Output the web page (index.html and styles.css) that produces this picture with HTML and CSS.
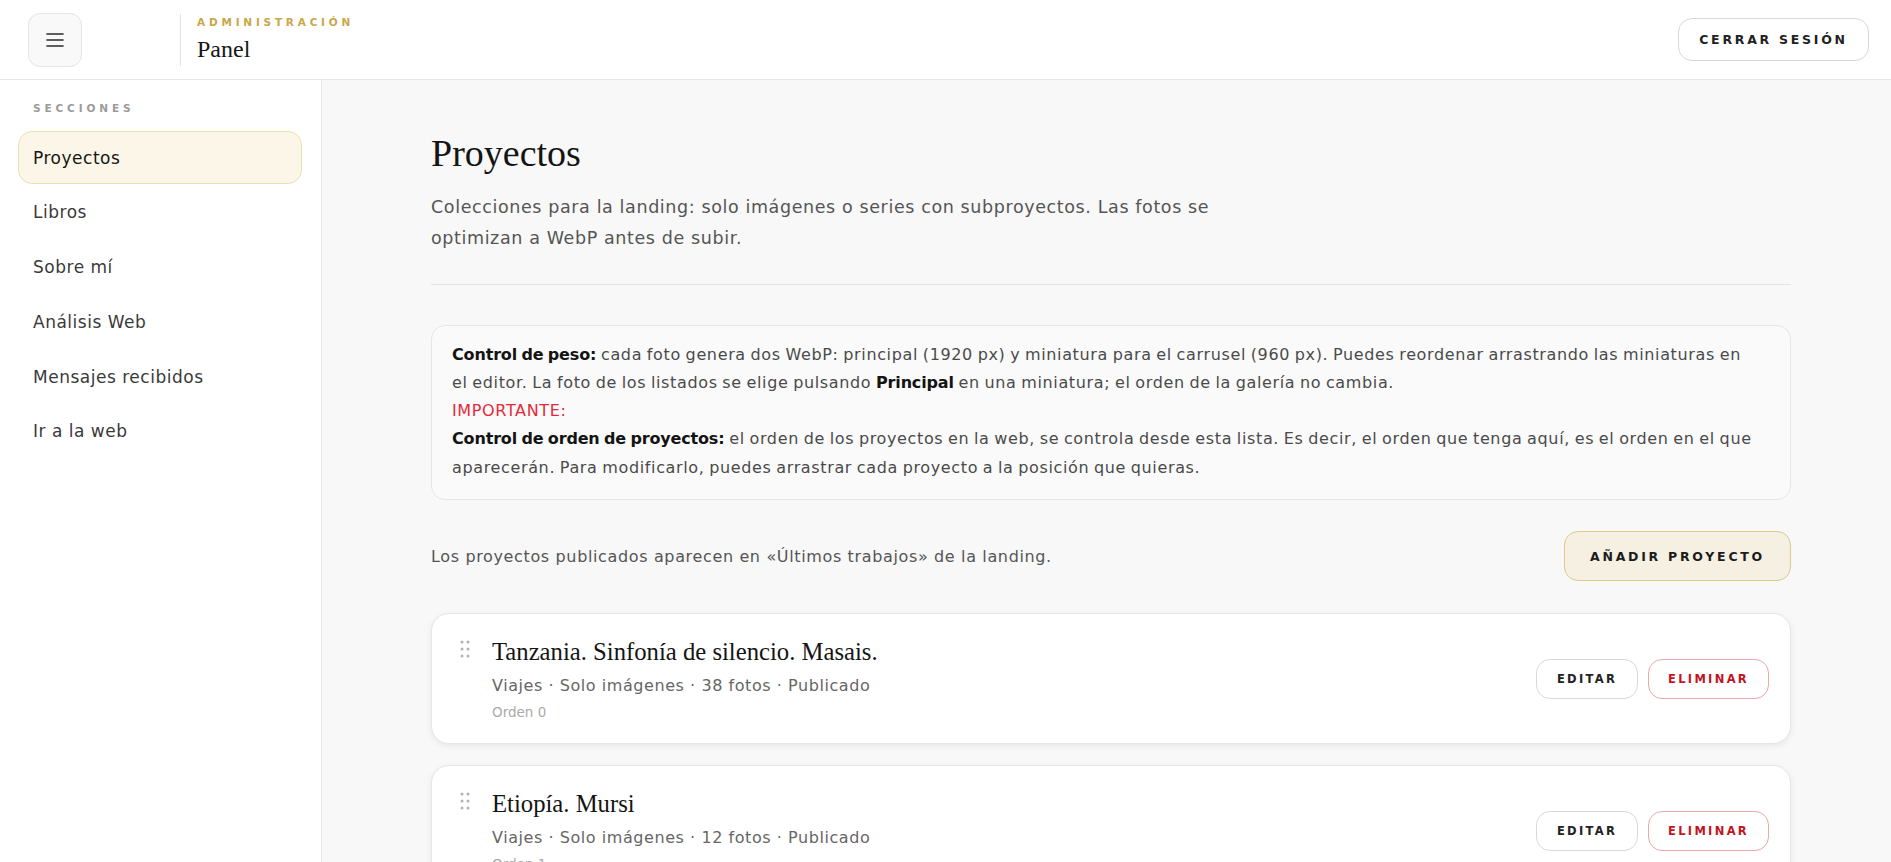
FILE: index.html
```html
<!DOCTYPE html>
<html lang="es">
<head>
  <meta charset="UTF-8">
  <title>Panel · Administración</title>
  <link rel="stylesheet" href="styles.css">
</head>
<body>
  <header class="topbar">
    <button class="menu-btn" aria-label="Menú">
      <svg width="18" height="14" viewBox="0 0 18 14" fill="none" stroke="#2b2b2b" stroke-width="1.6" stroke-linecap="round">
        <line x1="1" y1="1" x2="17" y2="1"/>
        <line x1="1" y1="7" x2="17" y2="7"/>
        <line x1="1" y1="13" x2="17" y2="13"/>
      </svg>
    </button>
    <div class="brand">
      <span class="brand-kicker">Administración</span>
      <span class="brand-title">Panel</span>
    </div>
    <button class="btn btn-outline logout">Cerrar sesión</button>
  </header>

  <div class="layout">
    <aside class="sidebar">
      <div class="sidebar-label">Secciones</div>
      <nav class="nav">
        <a href="#" class="nav-item active">Proyectos</a>
        <a href="#" class="nav-item">Libros</a>
        <a href="#" class="nav-item">Sobre mí</a>
        <a href="#" class="nav-item">Análisis Web</a>
        <a href="#" class="nav-item">Mensajes recibidos</a>
        <a href="#" class="nav-item">Ir a la web</a>
      </nav>
    </aside>

    <main class="content">
      <section class="page-head">
        <h1>Proyectos</h1>
        <p class="lead">Colecciones para la landing: solo imágenes o series con subproyectos. Las fotos se optimizan a WebP antes de subir.</p>
      </section>

      <div class="notice">
        <strong>Control de peso:</strong> cada foto genera dos WebP: principal (1920 px) y miniatura para el carrusel (960 px). Puedes reordenar arrastrando las miniaturas en el editor. La foto de los listados se elige pulsando <strong>Principal</strong> en una miniatura; el orden de la galería no cambia.<br>
        <span class="warn">IMPORTANTE:</span><br>
        <strong>Control de orden de proyectos:</strong> el orden de los proyectos en la web, se controla desde esta lista. Es decir, el orden que tenga aquí, es el orden en el que aparecerán. Para modificarlo, puedes arrastrar cada proyecto a la posición que quieras.
      </div>

      <div class="toolbar">
        <p>Los proyectos publicados aparecen en «Últimos trabajos» de la landing.</p>
        <button class="btn btn-gold">Añadir proyecto</button>
      </div>

      <ul class="project-list">
        <li class="project-card">
          <span class="handle">
            <svg width="10" height="18" viewBox="0 0 10 18" fill="#b3b3b3">
              <circle cx="2" cy="2" r="1.5"/><circle cx="8" cy="2" r="1.5"/>
              <circle cx="2" cy="9" r="1.5"/><circle cx="8" cy="9" r="1.5"/>
              <circle cx="2" cy="16" r="1.5"/><circle cx="8" cy="16" r="1.5"/>
            </svg>
          </span>
          <div class="project-info">
            <h2>Tanzania. Sinfonía de silencio. Masais.</h2>
            <div class="meta">Viajes · Solo imágenes · 38 fotos · Publicado</div>
            <div class="order">Orden 0</div>
          </div>
          <div class="actions">
            <button class="btn btn-small">Editar</button>
            <button class="btn btn-small btn-danger">Eliminar</button>
          </div>
        </li>
        <li class="project-card">
          <span class="handle">
            <svg width="10" height="18" viewBox="0 0 10 18" fill="#b3b3b3">
              <circle cx="2" cy="2" r="1.5"/><circle cx="8" cy="2" r="1.5"/>
              <circle cx="2" cy="9" r="1.5"/><circle cx="8" cy="9" r="1.5"/>
              <circle cx="2" cy="16" r="1.5"/><circle cx="8" cy="16" r="1.5"/>
            </svg>
          </span>
          <div class="project-info">
            <h2>Etiopía. Mursi</h2>
            <div class="meta">Viajes · Solo imágenes · 12 fotos · Publicado</div>
            <div class="order">Orden 1</div>
          </div>
          <div class="actions">
            <button class="btn btn-small">Editar</button>
            <button class="btn btn-small btn-danger">Eliminar</button>
          </div>
        </li>
      </ul>
    </main>
  </div>
</body>
</html>
```

FILE: styles.css
```css
* {
  box-sizing: border-box;
}

body {
  margin: 0;
  font-family: "DejaVu Sans", "Open Sans", sans-serif;
  background: #f8f8f8;
  color: #333;
}

/* barra superior */
.topbar {
  display: flex;
  align-items: center;
  height: 80px;
  padding: 0 22px 0 28px;
  background: #fff;
  border-bottom: 1px solid #e6e6e6;
}

.menu-btn {
  display: flex;
  align-items: center;
  justify-content: center;
  width: 54px;
  height: 54px;
  padding: 0;
  background: #f9f9f9;
  border: 1px solid #e4e4e4;
  border-radius: 12px;
}

.brand {
  display: flex;
  flex-direction: column;
  height: 52px;
  margin-left: 98px;
  padding: 1px 0 0 16px;
  border-left: 1px solid #e2e2e2;
}

.brand-kicker {
  font-size: 10.5px;
  font-weight: 700;
  letter-spacing: 0.36em;
  text-transform: uppercase;
  color: #cba645;
  line-height: 14px;
}

.brand-title {
  font-family: "Liberation Serif", serif;
  font-size: 24px;
  color: #161616;
  line-height: 30px;
  margin-top: 5px;
}

.btn {
  font-family: inherit;
  font-size: 12.5px;
  font-weight: 700;
  letter-spacing: 0.2em;
  text-transform: uppercase;
  color: #222;
  background: #fff;
  border: 1px solid #d8d8d8;
  border-radius: 14px;
  cursor: pointer;
}

.logout {
  margin-left: auto;
  width: 191px;
  height: 43px;
  letter-spacing: 0.22em;
}

/* columnas */
.layout {
  display: grid;
  grid-template-columns: 322px 1fr;
  min-height: calc(100vh - 80px);
}

.sidebar {
  background: #fff;
  border-right: 1px solid #e6e6e6;
  padding: 20px 19px 0 18px;
}

.sidebar-label {
  font-size: 10.5px;
  font-weight: 700;
  letter-spacing: 0.37em;
  text-transform: uppercase;
  color: #9b9b9b;
  line-height: 16px;
  padding-left: 15px;
  margin-bottom: 15px;
}

.nav {
  display: flex;
  flex-direction: column;
  gap: 1.8px;
}

.nav-item {
  display: flex;
  align-items: center;
  height: 53px;
  padding: 0 14px;
  font-size: 17px;
  letter-spacing: 0.03em;
  color: #3a3a3a;
  text-decoration: none;
  border: 1px solid transparent;
  border-radius: 14px;
}

.nav-item.active {
  background: #fbf6e8;
  border-color: #eddfae;
  color: #161616;
}

/* contenido */
.content {
  padding: 51px 100px 40px 109px;
  max-width: 1569px;
}

.page-head {
  padding-bottom: 30px;
  border-bottom: 1px solid #e3e3e3;
  margin-bottom: 40px;
}

h1 {
  margin: 0 0 15px;
  font-family: "Liberation Serif", serif;
  font-size: 38px;
  font-weight: 400;
  line-height: 1.2;
  color: #141414;
}

.lead {
  margin: 0;
  max-width: 820px;
  font-size: 17.5px;
  letter-spacing: 0.035em;
  line-height: 31px;
  color: #555;
}

.notice {
  padding: 15px 36px 17px 20px;
  background: #fafafa;
  border: 1px solid #e6e6e6;
  border-radius: 14px;
  font-size: 16px;
  letter-spacing: 0.04em;
  word-spacing: -1px;
  line-height: 28.3px;
  color: #4a4a4a;
}

.notice strong {
  font-weight: 700;
  letter-spacing: -0.01em;
  color: #141414;
}

.warn {
  color: #e5293b;
}

.toolbar {
  display: flex;
  align-items: center;
  justify-content: space-between;
  margin: 31px 0 32px;
}

.toolbar p {
  margin: 0;
  font-size: 16px;
  letter-spacing: 0.04em;
  color: #555;
}

.btn-gold {
  width: 227px;
  height: 50px;
  background: #f5f0e1;
  border-color: #dcc98b;
  color: #1c1c1c;
  letter-spacing: 0.22em;
}

/* listado de proyectos */
.project-list {
  list-style: none;
  margin: 0;
  padding: 0;
  display: flex;
  flex-direction: column;
  gap: 21px;
}

.project-card {
  display: flex;
  align-items: center;
  padding: 22px 21px 21px 28px;
  background: #fff;
  border: 1px solid #e6e6e6;
  border-radius: 18px;
  box-shadow: 0 2px 6px rgba(0, 0, 0, 0.07);
}

.handle {
  align-self: flex-start;
  margin-top: 4px;
  width: 10px;
  margin-right: 22px;
  line-height: 0;
}

.project-info {
  flex: 1;
}

.project-info h2 {
  margin: 0;
  font-family: "Liberation Serif", serif;
  font-size: 24.7px;
  font-weight: 400;
  line-height: 31px;
  color: #141414;
}

.meta {
  margin-top: 7px;
  font-size: 16px;
  letter-spacing: 0.035em;
  line-height: 24px;
  color: #666;
}

.order {
  margin-top: 4px;
  font-size: 13.5px;
  line-height: 20px;
  color: #aaa;
}

.actions {
  display: flex;
  gap: 10px;
}

.btn-small {
  height: 40px;
  padding: 0;
  font-size: 11.5px;
  letter-spacing: 0.2em;
}

.btn-small:first-child {
  width: 102px;
}

.btn-danger {
  width: 121px;
  color: #c3141f;
  border-color: #f0a5ac;
}
```
